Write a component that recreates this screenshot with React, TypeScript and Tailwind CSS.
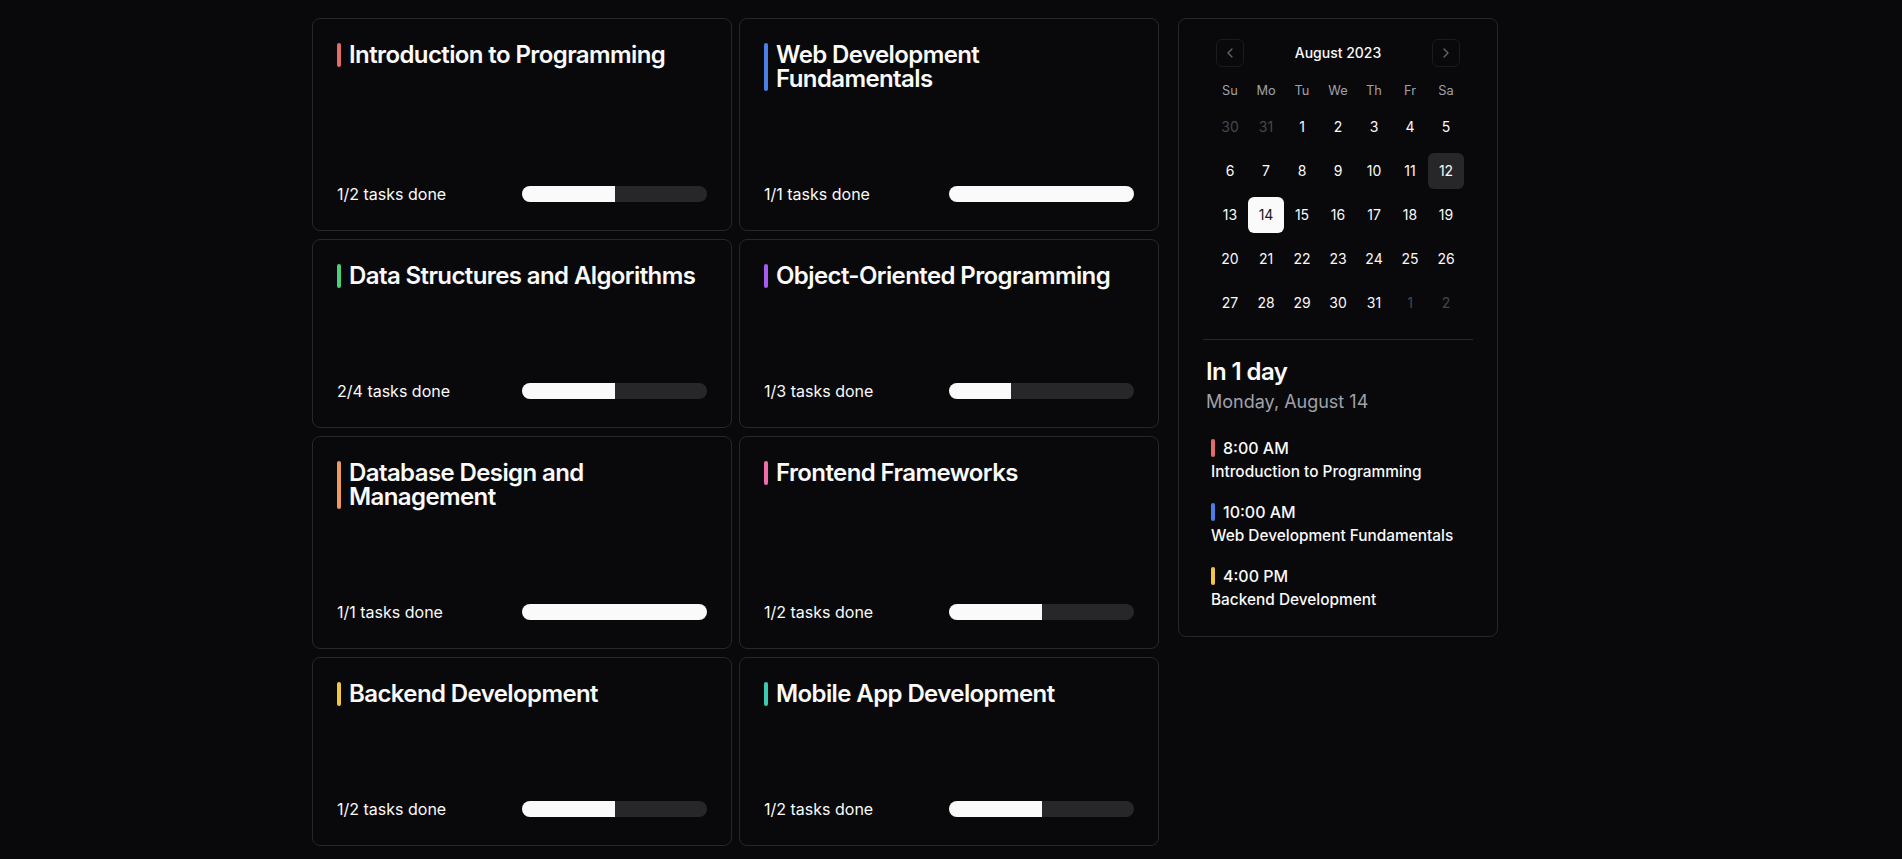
import { ChevronLeft, ChevronRight } from "lucide-react";

type Course = {
  title: string;
  color: string;
  done: number;
  total: number;
};

const courses: Course[] = [
  { title: "Introduction to Programming", color: "bg-[#e06c6c]", done: 1, total: 2 },
  { title: "Web Development Fundamentals", color: "bg-[#4a7fe6]", done: 1, total: 1 },
  { title: "Data Structures and Algorithms", color: "bg-[#4ccf7a]", done: 2, total: 4 },
  { title: "Object-Oriented Programming", color: "bg-[#a45cf0]", done: 1, total: 3 },
  { title: "Database Design and Management", color: "bg-[#ee9a5c]", done: 1, total: 1 },
  { title: "Frontend Frameworks", color: "bg-[#ec6fa8]", done: 1, total: 2 },
  { title: "Backend Development", color: "bg-[#f1c644]", done: 1, total: 2 },
  { title: "Mobile App Development", color: "bg-[#3cc9b0]", done: 1, total: 2 },
];

const events = [
  { time: "8:00 AM", title: "Introduction to Programming", color: "bg-[#e06c6c]" },
  { time: "10:00 AM", title: "Web Development Fundamentals", color: "bg-[#4a7fe6]" },
  { time: "4:00 PM", title: "Backend Development", color: "bg-[#f1c644]" },
];

const weekDays = ["Su", "Mo", "Tu", "We", "Th", "Fr", "Sa"];

// August 2023, weeks starting Sunday
const weeks: { day: number; outside?: boolean }[][] = [
  [{ day: 30, outside: true }, { day: 31, outside: true }, { day: 1 }, { day: 2 }, { day: 3 }, { day: 4 }, { day: 5 }],
  [{ day: 6 }, { day: 7 }, { day: 8 }, { day: 9 }, { day: 10 }, { day: 11 }, { day: 12 }],
  [{ day: 13 }, { day: 14 }, { day: 15 }, { day: 16 }, { day: 17 }, { day: 18 }, { day: 19 }],
  [{ day: 20 }, { day: 21 }, { day: 22 }, { day: 23 }, { day: 24 }, { day: 25 }, { day: 26 }],
  [{ day: 27 }, { day: 28 }, { day: 29 }, { day: 30 }, { day: 31 }, { day: 1, outside: true }, { day: 2, outside: true }],
];

function CourseCard({ course }: { course: Course }) {
  const pct = (course.done / course.total) * 100;
  return (
    <div className="flex flex-col rounded-lg border border-[#27272a] bg-[#09090b] p-6">
      <div className="flex gap-2">
        <div className={`w-1 shrink-0 rounded-full ${course.color}`} />
        <h3 className="text-2xl font-semibold leading-none tracking-tight text-[#fafafa]">
          {course.title}
        </h3>
      </div>
      <div className="min-h-[91px] flex-1" />
      <div className="flex items-center justify-between">
        <span className="text-base text-[#fafafa]">
          {course.done}/{course.total} tasks done
        </span>
        <div className="h-4 w-1/2 overflow-hidden rounded-full bg-[#27272a]">
          <div className="h-full bg-[#fafafa]" style={{ width: `${pct}%` }} />
        </div>
      </div>
    </div>
  );
}

function Calendar() {
  return (
    <div className="mx-auto w-[252px]">
      {/* Caption */}
      <div className="flex h-7 items-center justify-between px-1">
        <button className="flex h-7 w-7 items-center justify-center rounded-md border border-[#27272a] text-[#a1a1aa] opacity-60">
          <ChevronLeft className="h-4 w-4" />
        </button>
        <span className="text-sm font-medium text-[#fafafa]">August 2023</span>
        <button className="flex h-7 w-7 items-center justify-center rounded-md border border-[#27272a] text-[#a1a1aa] opacity-60">
          <ChevronRight className="h-4 w-4" />
        </button>
      </div>

      {/* Weekdays */}
      <div className="mt-[14px] flex h-5 items-center">
        {weekDays.map((d) => (
          <div key={d} className="w-9 text-center text-[0.8rem] text-[#a1a1aa]">
            {d}
          </div>
        ))}
      </div>

      {/* Days */}
      {weeks.map((week, i) => (
        <div key={i} className="mt-2 flex">
          {week.map((c, j) => {
            const selected = !c.outside && c.day === 14;
            const today = !c.outside && c.day === 12;
            return (
              <div
                key={j}
                className={
                  "flex h-9 w-9 items-center justify-center rounded-md text-sm " +
                  (selected
                    ? "bg-[#fafafa] text-[#18181b]"
                    : today
                      ? "bg-[#27272a] text-[#fafafa]"
                      : c.outside
                        ? "text-[#a1a1aa] opacity-40"
                        : "text-[#fafafa]")
                }
              >
                {c.day}
              </div>
            );
          })}
        </div>
      ))}
    </div>
  );
}

export default function App() {
  return (
    <div className="min-h-screen bg-[#09090b] font-['Inter',sans-serif] text-[#fafafa]">
      <div className="mx-auto flex w-[1280px] items-start gap-[19px] pl-px pt-[18px] pb-[14px]">
        {/* Course grid */}
        <div className="grid w-[847px] grid-cols-2 gap-x-[7px] gap-y-2">
          {courses.map((c) => (
            <CourseCard key={c.title} course={c} />
          ))}
        </div>

        {/* Calendar + upcoming */}
        <div className="w-[320px] rounded-lg border border-[#27272a] bg-[#09090b] px-6 pt-5 pb-6">
          <Calendar />

          <div className="mt-[18px] h-px bg-[#27272a]" />

          <div className="mt-4 pl-[3px]">
            <h2 className="text-2xl font-semibold tracking-tight text-[#fafafa]">In 1 day</h2>
            <p className="text-lg text-[#a1a1aa]">Monday, August 14</p>
          </div>

          <div className="mt-5 flex flex-col gap-4 pl-2">
            {events.map((e) => (
              <div key={e.time}>
                <div className="flex items-center gap-2">
                  <div className={`h-[18px] w-1 rounded-full ${e.color}`} />
                  <span className="text-base font-medium text-[#fafafa]">{e.time}</span>
                </div>
                <div className="text-[15.4px] leading-6 font-medium text-[#fafafa]">{e.title}</div>
              </div>
            ))}
          </div>
        </div>
      </div>
    </div>
  );
}
